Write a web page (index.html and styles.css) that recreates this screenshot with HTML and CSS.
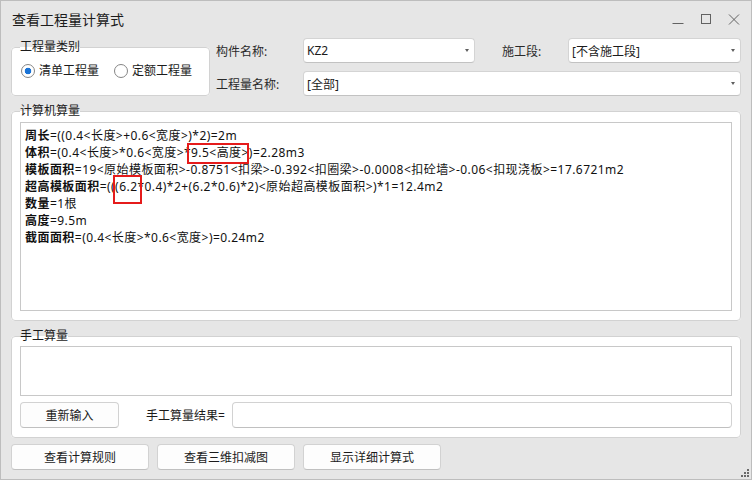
FILE: index.html
```html
<!DOCTYPE html>
<html lang="zh-CN">
<head>
<meta charset="utf-8">
<title>查看工程量计算式</title>
<link rel="stylesheet" href="styles.css">
</head>
<body>
<div class="window">
  <div class="titlebar">
    <span class="title">查看工程量计算式</span>
    <div class="controls">
      <span class="ctl"><svg width="12" height="12" viewBox="0 0 12 12"><path d="M0.5 9.5H11.5" stroke="#626262" stroke-width="1"/></svg></span>
      <span class="ctl"><svg width="12" height="12" viewBox="0 0 12 12"><rect x="1.5" y="0.5" width="9" height="9" fill="none" stroke="#626262" stroke-width="1"/></svg></span>
      <span class="ctl"><svg width="12" height="12" viewBox="0 0 12 12"><path d="M1 0.5L11 10.5M11 0.5L1 10.5" stroke="#626262" stroke-width="1"/></svg></span>
    </div>
  </div>
  <div class="content">
    <div class="top">
      <fieldset class="group type-group">
        <legend>工程量类别</legend>
        <div class="radios">
          <span class="radio checked"><span class="dot"></span>清单工程量</span>
          <span class="radio second"><span class="dot"></span>定额工程量</span>
        </div>
      </fieldset>
      <div class="fields">
        <span class="lbl">构件名称:</span>
        <div class="combo"><span>KZ2</span><span class="arrow"></span></div>
        <span class="lbl lbl-seg">施工段:</span>
        <div class="combo"><span>[不含施工段]</span><span class="arrow"></span></div>
        <span class="lbl">工程量名称:</span>
        <div class="combo combo-wide"><span>[全部]</span><span class="arrow"></span></div>
      </div>
    </div>

    <fieldset class="group calc-group">
      <legend>计算机算量</legend>
      <div class="textbox formulas">
        <div class="line"><b>周长</b>=((0.4&lt;长度&gt;+0.6&lt;宽度&gt;)*2)=2m</div>
        <div class="line"><b>体积</b>=(0.4&lt;长度&gt;*0.6&lt;宽度&gt;*9.5&lt;高度&gt;)=2.28m3</div>
        <div class="line"><b>模板面积</b>=19&lt;原始模板面积&gt;-0.8751&lt;扣梁&gt;-0.392&lt;扣圈梁&gt;-0.0008&lt;扣砼墙&gt;-0.06&lt;扣现浇板&gt;=17.6721m2</div>
        <div class="line"><b>超高模板面积</b>=(((6.2*0.4)*2+(6.2*0.6)*2)&lt;原始超高模板面积&gt;)*1=12.4m2</div>
        <div class="line"><b>数量</b>=1根</div>
        <div class="line"><b>高度</b>=9.5m</div>
        <div class="line"><b>截面面积</b>=(0.4&lt;长度&gt;*0.6&lt;宽度&gt;)=0.24m2</div>
        <span class="mark mark-1"></span>
        <span class="mark mark-2"></span>
      </div>
    </fieldset>

    <fieldset class="group manual-group">
      <legend>手工算量</legend>
      <div class="textbox manual-input"></div>
      <div class="manual-row">
        <span class="btn btn-reset">重新输入</span>
        <span class="result-lbl">手工算量结果=</span>
        <span class="result-input"></span>
      </div>
    </fieldset>

    <div class="buttons">
      <span class="btn btn-bottom">查看计算规则</span>
      <span class="btn btn-bottom">查看三维扣减图</span>
      <span class="btn btn-bottom">显示详细计算式</span>
    </div>
  </div>
  <svg class="grip" width="8" height="8" viewBox="0 0 8 8">
    <rect x="6" y="0" width="2" height="2" fill="#6a6a6a"/>
    <rect x="3" y="3" width="2" height="2" fill="#6a6a6a"/>
    <rect x="6" y="3" width="2" height="2" fill="#6a6a6a"/>
    <rect x="0" y="6" width="2" height="2" fill="#6a6a6a"/>
    <rect x="3" y="6" width="2" height="2" fill="#6a6a6a"/>
    <rect x="6" y="6" width="2" height="2" fill="#6a6a6a"/>
  </svg>
</div>
</body>
</html>
```

FILE: styles.css
```css
* { box-sizing: border-box; }
html, body { margin: 0; padding: 0; }
body {
  width: 752px;
  height: 480px;
  font-family: "Noto Sans", "Noto Sans CJK SC", sans-serif;
  font-size: 12px;
  color: #1b1b1b;
  background: #e6e6e6;
}
.window {
  position: relative;
  width: 752px;
  height: 480px;
  border: 1px solid #bdbdbd;
  background: #e6e6e6;
  display: flex;
  flex-direction: column;
}
.titlebar {
  height: 37px;
  flex: none;
  display: flex;
  align-items: center;
  padding-left: 11px;
  padding-right: 3px;
}
.title {
  flex: 1;
  font-size: 14px;
  color: #1c1c1c;
  line-height: 18px;
}
.controls { display: flex; }
.ctl {
  width: 28px;
  height: 28px;
  display: flex;
  align-items: center;
  justify-content: center;
}
.content {
  padding: 0 10px;
  display: flex;
  flex-direction: column;
}
.top {
  display: flex;
  height: 58px;
}
.group {
  margin: 0;
  border: 1px solid #d2d2d2;
  border-radius: 4px;
  background: #ffffff;
  padding: 0 8px;
  min-width: 0;
}
.group legend {
  padding: 0;
  margin: 0;
  font-size: 12px;
  line-height: 16px;
  color: #1b1b1b;
}
.type-group {
  width: 199px;
  margin-top: 1px;
  flex: none;
}
.radios {
  display: flex;
  align-items: center;
  height: 18px;
  margin-top: 7px;
}
.radio {
  display: flex;
  align-items: center;
  line-height: 18px;
}
.radio.checked { margin-left: 1px; }
.radio.second { margin-left: 15px; }
.dot {
  width: 14px;
  height: 14px;
  border-radius: 50%;
  border: 1px solid #858585;
  background: #fff;
  margin-right: 4px;
  flex: none;
}
.radio.checked .dot {
  background: radial-gradient(circle, #1a73d6 0, #1a73d6 3px, #ffffff 3.6px);
}
.fields {
  margin-left: 6px;
  display: grid;
  grid-template-columns: 87px 172px 93px 173px;
  grid-template-rows: 25px 25px;
  row-gap: 8px;
  align-items: center;
}
.lbl { color: #2a2a2a; }
.lbl-seg { padding-left: 27px; }
.combo {
  height: 25px;
  background: #ffffff;
  border: 1px solid #d4d4d4;
  border-bottom-color: #c2c2c2;
  border-radius: 4px;
  display: flex;
  align-items: center;
  justify-content: space-between;
  padding: 0 5px 0 3px;
  color: #1b1b1b;
}
.combo-wide { grid-column: 2 / 5; }
.arrow {
  width: 0;
  height: 0;
  border-left: 2.5px solid transparent;
  border-right: 2.5px solid transparent;
  border-top: 3px solid #5e5e5e;
}
.calc-group {
  margin-top: 7px;
  padding-top: 3px;
  padding-bottom: 9px;
}
.textbox {
  background: #ffffff;
  border: 1px solid #c8c8c8;
}
.formulas {
  position: relative;
  height: 189px;
  padding: 4px 4px;
  font-size: 12px;
  line-height: 17px;
  letter-spacing: 0.45px;
  color: #111111;
  white-space: nowrap;
}
.formulas b { font-weight: 700; }
.mark {
  position: absolute;
  border: 2px solid #e51b1b;
}
.mark-1 { left: 166px; top: 20px; width: 62px; height: 21px; }
.mark-2 { left: 92px; top: 52px; width: 29px; height: 29px; }
.manual-group {
  margin-top: 7px;
  padding-top: 2px;
  padding-bottom: 9px;
}
.manual-input { height: 50px; }
.manual-row {
  display: flex;
  align-items: center;
  height: 26px;
  margin-top: 6px;
}
.btn {
  display: flex;
  align-items: center;
  justify-content: center;
  height: 26px;
  background: #fdfdfd;
  border: 1px solid #d2d2d2;
  border-bottom-color: #c0c0c0;
  border-radius: 4px;
  color: #1b1b1b;
}
.btn-reset { width: 99px; }
.result-lbl { margin-left: 27px; width: 80px; white-space: nowrap; }
.result-input {
  flex: 1;
  margin-left: 6px;
  height: 26px;
  background: #ffffff;
  border: 1px solid #d2d2d2;
  border-bottom-color: #c0c0c0;
  border-radius: 4px;
}
.buttons {
  display: flex;
  gap: 8px;
  margin-top: 6px;
}
.btn-bottom { width: 138px; }
.grip {
  position: absolute;
  right: 2px;
  bottom: 2px;
}
```
